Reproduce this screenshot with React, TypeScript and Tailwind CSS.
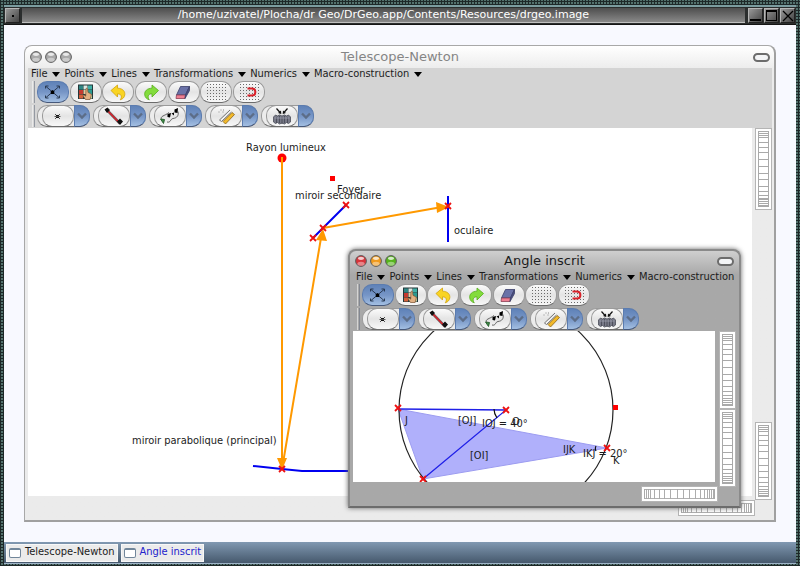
import React from "react";

const ink = "#1c1c1c";

const ToolIcon: React.FC<{ name: string }> = ({ name }) => {
  const dots = [];
  for (let r = 0; r < 6; r++) {
    for (let c = 0; c < 7; c++) {
      dots.push(<rect key={`${r}-${c}`} x={7 + c * 3} y={3 + r * 3} width="1" height="1" />);
    }
  }
  return (
    <svg width="32" height="22" viewBox="0 0 32 22" className="block shrink-0" aria-hidden="true">
      {name === "Select" && (
        <g stroke="#2a3a52" strokeWidth="1" fill="none">
          <path d="M9 5.500 22 16.500M22 5.500 9 16.500" />
          <path d="M8.500 7.500V5h3M19.500 5h3v2.500M8.500 14.500V17h3M19.500 17h3v-2.500" />
          <path d="M13.500 10.500l2-1.500 2 1.500-.5 2.500h-3z" fill="#000" stroke="none" />
        </g>
      )}
      {name === "Style" && (
        <g>
          <rect x="8" y="3.500" width="15" height="14.500" fill="#24383a" />
          <rect x="9" y="4.500" width="4" height="4" fill="#2f8684" />
          <rect x="13.500" y="4.500" width="4" height="4" fill="#d9e9e4" />
          <rect x="18" y="4.500" width="4" height="4" fill="#3fb0a6" />
          <rect x="9" y="9" width="4" height="4" fill="#c5392f" />
          <rect x="13.500" y="9" width="4" height="4" fill="#e7c9a0" />
          <rect x="18" y="9" width="4" height="4" fill="#2b9a91" />
          <rect x="9" y="13.500" width="4" height="4" fill="#d4603a" />
          <rect x="18" y="13.500" width="4" height="4" fill="#c9d6a4" />
          <path
            d="M16 7.500c.8-.6 1.600 0 1.700.9l.3 3 2.500 1.200c.8.500.9 1.300.6 2.200l-1 3.700h-4.600l-2.300-3.300c-.5-1 .7-1.600 1.500-.8l1 .8z"
            fill="#e2b183"
            stroke="#7a5130"
            strokeWidth=".7"
          />
        </g>
      )}
      {name === "Undo" && (
        <path
          d="M9 9.500 15.500 4v3.200c5 .1 7.700 3 7.300 6.600-.3 2.600-2.200 4.500-4.600 5 1.700-2 2.100-6-2.700-6V16z"
          fill="#f9d423"
          stroke="#d2a30a"
          strokeWidth=".8"
        />
      )}
      {name === "Redo" && (
        <path
          d="M23.500 9.500 17 4v3.200c-5 .1-7.700 3-7.300 6.600.3 2.600 2.200 4.500 4.600 5-1.700-2-2.100-6 2.700-6V16z"
          fill="#83dc3c"
          stroke="#55ad1c"
          strokeWidth=".8"
        />
      )}
      {name === "Eraser" && (
        <g stroke="#3b3f68" strokeWidth=".8" strokeLinejoin="round">
          <path d="M12.500 5.500h9l-4 8.500h-9z" fill="#6a72a8" />
          <path d="M8.500 14h9l-.5 3.500H8z" fill="#ee7f92" stroke="#8d4056" />
          <path d="M21.500 5.500v4L17 17.500l.5-3.500z" fill="#4b5185" />
        </g>
      )}
      {(name === "Grid" || name === "Snap to grid") && <g fill="#6a6a6a">{dots}</g>}
      {name === "Snap to grid" && (
        <path d="M14.500 7.500h4.500c4.500 0 4.500 7 0 7h-4.500" fill="none" stroke="#d8222a" strokeWidth="2" />
      )}
      {name === "Point tools" && (
        <g fill="#111">
          <rect x="14" y="10" width="3" height="3" />
          <path d="M12.500 11h6v1h-6zM13 9h1v1h-1zM17 9h1v1h-1zM13 13h1v1h-1zM17 13h1v1h-1z" fill="#555" />
        </g>
      )}
      {name === "Line tools" && (
        <g>
          <path d="M8.500 4.500 22 18.500" stroke="#666" strokeWidth="2.600" />
          <path d="M8 4 22 18.500" stroke="#d8202a" strokeWidth="1.600" />
          <path d="M6.500 4.500 9.500 2.500 12 5 9 8zM19 16.500l3-3 3 3-3 3.500z" fill="#111" />
        </g>
      )}
      {name === "Transformation tools" && (
        <g fill="none" stroke="#555" strokeWidth=".9">
          <path d="M8 15c-3-4 3-4 7-7.500M13 17c4 1 3-3 6-3.500 4-.5 6-3 5-7" />
          <path d="M6.500 14l4 .5-1 4z" fill="#3f8a48" stroke="#245c2a" />
          <path d="M13.500 9l3.500-1-1 4.500-2.500-.5zM20.500 4.500l3.500-1.500-.5 5-3-.5zM17.500 8.500l2.500-1v3z" fill="#000" stroke="none" />
        </g>
      )}
      {name === "Measure tools" && (
        <g>
          <path d="M13 16.500 22 7.500l2.500 2L15.500 19z" fill="#f2b92a" stroke="#8a651a" strokeWidth=".8" />
          <path d="M9.500 15 20 5M9.500 15l2 1.500L21.500 7" fill="#f3f3f3" stroke="#666" strokeWidth=".9" />
          <path d="M8.500 7h1M10.500 5h1M12.500 7h1M13 5h1" stroke="#888" strokeWidth="1" />
        </g>
      )}
      {name === "Macro tools" && (
        <g>
          <path d="M10.500 3.500l4 4.500M21.500 3.500l-4 4.500" stroke="#111" strokeWidth="1.200" />
          <path d="M15.300 9l-.3-3.500-3 2.500zM16.700 9l.3-3.500 3 2.500z" fill="#111" />
          <path
            d="M7.500 12l2-2 2 1 2-1 2.500 1 2.500-1 2 1 2-1 2 2v5l-2 1.500-2-1-2 1.500-2.500-1-2.500 1-2-1.500-2 1-2-1.500z"
            fill="#777987"
            stroke="#4a4c58"
            strokeWidth=".8"
          />
          <path d="M10.500 12v6M13.500 11v7M16 12v7M18.500 11v7M21.500 12v6" stroke="#4a4c58" strokeWidth=".9" />
          <path d="M8.500 13h15" stroke="#a8abb8" strokeWidth=".7" />
        </g>
      )}
    </svg>
  );
};

const menus = ["File", "Points", "Lines", "Transformations", "Numerics", "Macro-construction"];
const actions = ["Select", "Style", "Undo", "Redo", "Eraser", "Grid", "Snap to grid"];
const toolGroups = ["Point tools", "Line tools", "Transformation tools", "Measure tools", "Macro tools"];

const Handle: React.FC = () => (
  <div className="w-[3px] h-[22px] mr-[2px] border-l border-r border-l-white/50 border-r-gray-500/60" />
);

const Toolbar: React.FC = () => (
  <div className="overflow-hidden">
    <div className="flex h-3 items-center gap-1 pl-[3px] text-[11px] leading-3 text-[#1c1c1c]">
      {menus.map((menu) => (
        <button key={menu} className="flex shrink-0 items-center gap-[5px] whitespace-nowrap">
          {menu}
          <svg width="8" height="5" viewBox="0 0 8 5" aria-hidden="true">
            <path d="M0 0h8L4 5z" fill="#000" />
          </svg>
        </button>
      ))}
    </div>
    <div className="flex h-6 items-center pl-1">
      <Handle />
      <div className="flex w-[228px] justify-between">
        {actions.map((action, i) => (
          <button
            key={action}
            aria-label={action}
            className={`flex h-[22px] w-8 items-center justify-center overflow-hidden rounded-[10px] border ${
              i === 0
                ? "border-[#5b7cb0] border-b-[#46587a] bg-linear-to-b from-[#5f82b8] via-[#7695c6] to-[#a3bfe2]"
                : "border-[#9a9a9a] border-b-[#6c6c6c] bg-linear-to-b from-[#fbfbfb] via-[#e4e4e4] to-[#f8f8f8]"
            }`}
          >
            <ToolIcon name={action} />
          </button>
        ))}
      </div>
    </div>
    <div className="flex h-6 items-center pl-1">
      <Handle />
      <div className="flex gap-[3px]">
        {toolGroups.map((tool) => (
          <div
            key={tool}
            className="flex h-[22px] rounded-[10px] border border-[#9a9a9a] border-b-[#6c6c6c] bg-[#ececec] pl-1"
          >
            <button
              aria-label={tool}
              className="-my-px flex h-[22px] w-8 items-center justify-center overflow-hidden rounded-[10px] border border-[#9a9a9a] border-b-[#6c6c6c] bg-linear-to-b from-[#fbfbfb] via-[#e4e4e4] to-[#f8f8f8]"
            >
              <ToolIcon name={tool} />
            </button>
            <button
              aria-label={`More ${tool.toLowerCase()}`}
              className="-my-px -mr-px flex h-[22px] w-4 items-center justify-center rounded-r-[10px] border border-[#5b7cb0] border-b-[#46587a] bg-linear-to-b from-[#5f82b8] via-[#7695c6] to-[#a3bfe2]"
            >
              <svg width="10" height="8" viewBox="0 0 10 8" aria-hidden="true">
                <path d="M1 1.500l4 4 4-4" fill="none" stroke="#5c6d88" strokeWidth="2.400" />
              </svg>
            </button>
          </div>
        ))}
      </div>
    </div>
  </div>
);

const ticks = [2, 4, 6, 10, 15, 20, 26, 33, 39, 45, 51, 56, 60, 63, 65, 67, 69];

const Wheel: React.FC<{ label: string; size?: string; horizontal?: boolean }> = ({
  label,
  size = "h-[78px] w-[17px]",
  horizontal,
}) => (
  <label className={`relative block shrink-0 border border-[#b4b4b4] bg-white p-[2px] ${size}`}>
    <svg
      className="block h-full w-full"
      viewBox={horizontal ? "0 0 71 11" : "0 0 11 71"}
      preserveAspectRatio="none"
      shapeRendering="crispEdges"
      aria-hidden="true"
    >
      <g stroke="#a9a9a9" fill="none">
        <rect x=".5" y=".5" width={horizontal ? 70 : 10} height={horizontal ? 10 : 70} />
        {ticks.map((t) => (
          <path key={t} d={horizontal ? `M${t}.5 0v11` : `M0 ${t}.5h11`} />
        ))}
      </g>
    </svg>
    <input type="range" aria-label={label} className="absolute inset-0 h-full w-full opacity-0" />
  </label>
);

const Cross: React.FC<{ x: number; y: number }> = ({ x, y }) => (
  <path d={`M${x - 3} ${y - 3}l6 6m0-6l-6 6`} stroke="#ee1111" strokeWidth="1.800" fill="none" />
);

const TelescopeDrawing: React.FC = () => (
  <svg className="block h-full w-full text-[11px]" fill={ink}>
    <g stroke="#0000f0" strokeWidth="2" fill="none">
      <path d="M285 110 318 77M420 68v46M225 338l29 3 20 2h80" />
    </g>
    <g stroke="#ff9900" strokeWidth="2">
      <path d="M254 30v308M254 341 294 104M295 100 414 79" />
    </g>
    <circle cx="254" cy="30" r="4.500" fill="#f00" />
    <path d="M254 29v10" stroke="#ff9900" strokeWidth="2" />
    <g fill="#ff9900">
      <path d="M249 330h10l-5 12zM295 101l4 12-11-1zM421 79l-12 6-1-11z" />
    </g>
    <rect x="302" y="48" width="5" height="5" fill="#f00" />
    <Cross x={318} y={77} />
    <Cross x={295} y={100} />
    <Cross x={285} y={110} />
    <Cross x={420} y={78} />
    <Cross x={254} y={341} />
    <text x="218" y="23">Rayon lumineux</text>
    <text x="309" y="65">Foyer</text>
    <text x="267" y="71">miroir secondaire</text>
    <text x="426" y="106">oculaire</text>
    <text x="104" y="316">miroir parabolique (principal)</text>
  </svg>
);

const AngleDrawing: React.FC = () => (
  <svg className="block h-full w-full text-[11px]" fill={ink}>
    <path d="M45 78 70 148 254 117z" fill="#b0b0fb" stroke="#9c9cf0" strokeWidth="1" />
    <circle cx="153" cy="79" r="107" fill="none" stroke="#222" strokeWidth="1.200" />
    <path d="M45 78l108 1L70 148" fill="none" stroke="#2020e8" strokeWidth="1.300" />
    <path d="M141 78c0 4 1 6 3 9M243 115c-1 2-1 3 0 5" fill="none" stroke="#111" strokeWidth="1.200" />
    <rect x="260" y="74" width="5" height="5" fill="#f00" />
    <Cross x={45} y={77} />
    <Cross x={153} y={79} />
    <Cross x={70} y={148} />
    <Cross x={254} y={117} />
    <text x="52" y="93">J</text>
    <text x="105" y="93">[OJ]</text>
    <text x="129" y="96">IOJ = 40°</text>
    <text x="159" y="94">O</text>
    <text x="117" y="128">[OI]</text>
    <text x="210" y="122">IJK</text>
    <text x="230" y="126">IKJ = 20°</text>
    <text x="260" y="133">K</text>
  </svg>
);

const Bead: React.FC<{ label: string; color: string }> = ({ label, color }) => (
  <button aria-label={label} className="h-3 w-3">
    <svg width="12" height="12" viewBox="0 0 12 12" aria-hidden="true">
      <circle cx="6" cy="6" r="5.400" fill={color} stroke="#5c5c5c" strokeWidth="1" />
      <ellipse cx="6" cy="3.300" rx="3" ry="1.600" fill="#fff" opacity=".75" />
      <ellipse cx="6" cy="8.800" rx="3.600" ry="2" fill="#fff" opacity=".4" />
    </svg>
  </button>
);

const TitleRow: React.FC<{ title: string; colors: string[]; className: string }> = ({ title, colors, className }) => (
  <div className={`flex items-center justify-between ${className}`}>
    <div className="flex w-11 gap-[3px]">
      <Bead label="Close" color={colors[0]} />
      <Bead label="Collapse" color={colors[1]} />
      <Bead label="Expand" color={colors[2]} />
    </div>
    <h2 className="font-['DejaVu_Sans',sans-serif] text-[13px] leading-5">{title}</h2>
    <div className="flex w-11 justify-end">
      <button aria-label="Window menu" className="h-[9px] w-[17px] rounded-full border-2 border-[#6c6c6c] bg-gray-100" />
    </div>
  </div>
);

const frameDots =
  "bg-[#2c3b3b] bg-[repeating-linear-gradient(0deg,#1d2828_0_1px,transparent_1px_3px),repeating-linear-gradient(90deg,#1d2828_0_1px,#53716d_1px_3px)]";
const frameButton =
  "flex h-[15px] w-[15px] items-center justify-center border border-t-[#b5b5b5] border-l-[#b5b5b5] border-r-[#222] border-b-[#222] bg-linear-to-br from-[#999] to-[#444]";

export default function App() {
  return (
    <div
      className={`flex h-screen flex-col overflow-hidden px-1 pt-[5px] pb-[2px] font-['DejaVu_Sans_Condensed','DejaVu_Sans',sans-serif] ${frameDots}`}
    >
      {/* Host window title */}
      <header className="flex h-5 shrink-0 items-center gap-px border-t-2 border-b border-t-[#7b9c9f] border-b-[#151515] bg-[#2b2e2e] px-px">
        <button aria-label="System menu" className={`${frameButton} mr-px`}>
          <span className="h-[2px] w-[2px] bg-black" />
        </button>
        <h1 className="h-[15px] flex-1 border-b border-[#c0c0c0] bg-linear-to-b from-[#4e4e4e] to-[#898989] text-center font-['DejaVu_Sans',sans-serif] text-[11px] leading-[14px] text-white">
          /home/uzivatel/Plocha/dr Geo/DrGeo.app/Contents/Resources/drgeo.image
        </h1>
        <button aria-label="Minimize" className={`${frameButton} ml-[2px]`}>
          <span className="mt-2 h-[2px] w-[11px] bg-black" />
        </button>
        <button aria-label="Maximize" className={frameButton}>
          <span className="h-[11px] w-[11px] border border-t-2 border-black" />
        </button>
        <button aria-label="Quit" className={frameButton}>
          <svg width="12" height="12" viewBox="0 0 12 12" aria-hidden="true">
            <path d="M1 1l10 10M11 1 1 11" stroke="#000" strokeWidth="1.300" />
          </svg>
        </button>
      </header>

      <main className="relative flex-1 overflow-hidden bg-[#f8f9ff]">
        {/* Telescope window */}
        <section className="absolute inset-5 flex flex-col rounded-t-lg border border-[#a8a8a8] border-r-2 border-b-2 border-r-[#a0a0a0] border-b-[#a0a0a0] bg-[#ebebeb] bg-linear-to-b from-white to-[#ebebeb] to-[24px] pr-[2px] pl-[3px]">
          <TitleRow
            title="Telescope-Newton"
            colors={["#a9a9a9", "#a9a9a9", "#a9a9a9"]}
            className="h-[22px] shrink-0 px-[2px] text-[#858585]"
          />
          <div className="bg-[#d4d4d4]">
            <Toolbar />
          </div>
          <div className="flex min-h-0 flex-1">
            <div className="min-w-0 flex-1 bg-white">
              <TelescopeDrawing />
            </div>
            <div className="-mb-1 flex w-5 flex-col items-end justify-between">
              <Wheel label="Zoom" size="h-[82px] w-[17px]" />
              <Wheel label="Scroll vertically" />
            </div>
          </div>
          <div className="flex h-6 shrink-0 items-center justify-end pr-[17px]">
            <Wheel label="Scroll horizontally" size="h-4 w-[77px]" horizontal />
          </div>
        </section>

        {/* Angle window */}
        <section className="absolute top-[224px] left-[344px] flex h-[259px] w-[393px] flex-col rounded-t-lg border-2 border-[#8a8a8a] border-b-[#6c6c6c] bg-[#a8a8a8] bg-linear-to-b from-[#cfcfcf] to-[#a8a8a8] to-[24px] px-[3px] shadow-[0_0_5px_#666]">
          <TitleRow
            title="Angle inscrit"
            colors={["#d8343a", "#f09a1c", "#55b41c"]}
            className="h-5 shrink-0 px-[2px] text-[#1c1c1c]"
          />
          <Toolbar />
          <div className="flex min-h-0 flex-1">
            <div className="min-w-0 flex-1 bg-white">
              <AngleDrawing />
            </div>
            <div className="flex w-[21px] flex-col items-end">
              <Wheel label="Zoom" />
              <Wheel label="Scroll vertically" />
            </div>
          </div>
          <div className="flex h-6 shrink-0 items-center justify-end pr-[18px]">
            <Wheel label="Scroll horizontally" size="h-4 w-[77px]" horizontal />
          </div>
        </section>
      </main>

      {/* Task bar */}
      <nav className="flex h-[22px] shrink-0 items-center gap-[3px] border-b border-[#9fb4c8] bg-linear-to-b from-[#8199b2] to-[#46596d] px-[2px] text-[11px]">
        {["Telescope-Newton", "Angle inscrit"].map((task, i) => (
          <button
            key={task}
            className={`flex h-[18px] items-center gap-1 border border-[#f8f8f8] bg-[#ebebeb] px-[2px] whitespace-nowrap ${
              i === 1 ? "text-[#2222cc]" : "text-[#1c1c1c]"
            }`}
          >
            <span className="h-[10px] w-3 rounded-xs border border-t-2 border-[#71869a] bg-white" />
            {task}
          </button>
        ))}
      </nav>
    </div>
  );
}
